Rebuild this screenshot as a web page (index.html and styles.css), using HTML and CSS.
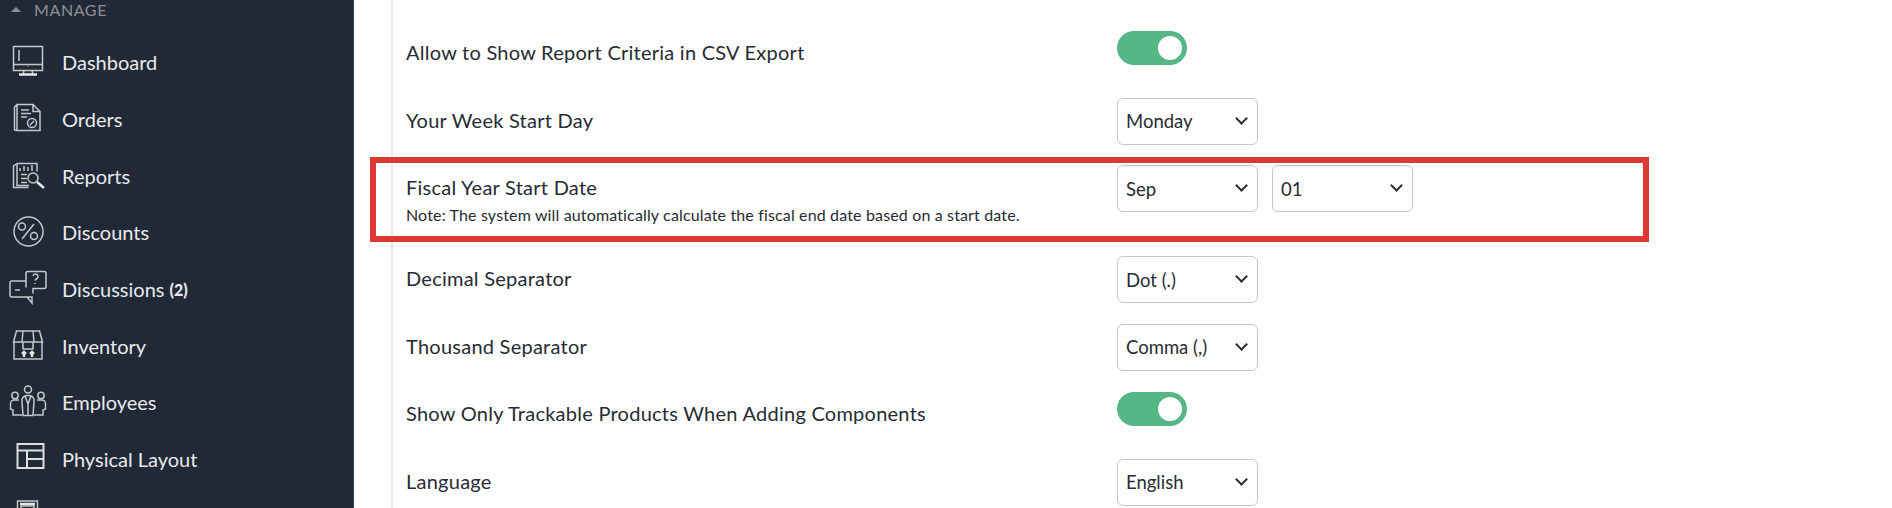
FILE: index.html
```html
<!DOCTYPE html>
<html lang="en">
<head>
  <meta charset="UTF-8" />
  <title>Settings</title>
  <link rel="stylesheet" href="styles.css">
</head>
<body>
  <div class="layout">
    <aside class="sidebar">
      <div class="menu-head"><span class="caret"></span>MANAGE</div>
      <a class="menu-item"><span class="menu-icon">
        <svg viewBox="0 0 38 32"><path d="M4.500.5h29v24h-29zM4.500 18.500h29M10 4v11M19 20.500v.5M15 25l-1 3M23 25l1 3"/><path class="thick" d="M10 28.500h18"/></svg>
      </span>Dashboard</a>
      <a class="menu-item"><span class="menu-icon">
        <svg viewBox="0 0 38 32"><path d="M8 1.500h16l7 7v19H8zM8 1.500L5.500 4v23L8 27.500M24 1.500v7h7M12 7h8M12 10.500h10M12 14h6"/><circle cx="23" cy="20" r="4.500"/><path d="M21 22l4-4"/></svg>
      </span>Orders</a>
      <a class="menu-item"><span class="menu-icon">
        <svg viewBox="0 0 38 32"><path d="M8 3.500h20v8M8 3.500v22h12M8 3.500L4.500 6v21.500h15M11 11V8M15 11V6M19 11V7M23 11V5M12 14.500h6M12 18.500h6M12 22.500h6"/><circle cx="24" cy="18" r="5"/><path class="thick" d="M28 22l7 6"/></svg>
      </span>Reports</a>
      <a class="menu-item"><span class="menu-icon">
        <svg viewBox="0 0 38 32"><circle cx="19.500" cy="15.500" r="14.500"/><circle cx="13" cy="10.500" r="3.500"/><circle cx="25" cy="20" r="3.500"/><path d="M25 8L13 23"/></svg>
      </span>Discounts</a>
      <a class="menu-item"><span class="menu-icon">
        <svg viewBox="0 0 38 32"><path d="M19-1.500h16a2 2 0 0 1 2 2v13a2 2 0 0 1-2 2H24v5M17 14.500v-14a2 2 0 0 1 2-2M17 8H3a2 2 0 0 0-2 2v12a2 2 0 0 0 2 2h20v6l-5-6M6 17h5"/><path d="M24 3a2.500 2.500 0 1 1 3 3l-1 1.500M26 10v1"/></svg>
      </span>Discussions <b class="count">(2)</b></a>
      <a class="menu-item"><span class="menu-icon">
        <svg viewBox="0 0 38 32"><path d="M4.500 12L7.500 1h23l3 11zM14 1l-1 11M24 1l1 11M5 12v17h28V12M14 12v7h10v-7"/><path class="thick" d="M15 27v-4M23 27v-4M13 24l2-2 2 2M21 24l2-2 2 2"/></svg>
      </span>Inventory</a>
      <a class="menu-item"><span class="menu-icon">
        <svg viewBox="0 0 38 32"><circle cx="19" cy="3.500" r="3.500"/><circle cx="6" cy="9.500" r="3.200"/><circle cx="32" cy="9.500" r="3.200"/><path d="M14 29.500l-1-14a5 5 0 0 1 5-6h2a5 5 0 0 1 5 6l-1 14zM16 10l3 8 3-8M19 18v11M10 14H5a3.500 3.500 0 0 0-3.500 3.500V23L4 24v5h9M28 14h5a3.500 3.500 0 0 1 3.500 3.500V23L34 24v5h-9"/></svg>
      </span>Employees</a>
      <a class="menu-item"><span class="menu-icon">
        <svg class="stroke-bright" viewBox="0 0 38 32"><path d="M8.500 1h26v24h-26zM8.500 7.500h26M18 7.500V25M18 16h16.500"/></svg>
      </span>Physical Layout</a>
      <a class="menu-item"><span class="menu-icon">
        <svg viewBox="0 0 38 32"><path d="M8.500 1h20v26h-20z"/><path class="thick" d="M11 4h15"/><path d="M12 6h13v6H12z"/></svg>
      </span></a>
    </aside>

    <main class="content">
      <div class="panel">
        <div class="row">
          <div class="row-label">Allow to Show Report Criteria in CSV Export</div>
          <div class="row-field"><span class="switch"></span></div>
        </div>
        <div class="row">
          <div class="row-label">Your Week Start Day</div>
          <div class="row-field"><span class="dropdown">Monday</span></div>
        </div>
        <div class="row row-marked">
          <div class="row-label">
            Fiscal Year Start Date
            <div class="note">Note: The system will automatically calculate the fiscal end date based on a start date.</div>
          </div>
          <div class="row-field"><span class="dropdown">Sep</span><span class="dropdown">01</span></div>
        </div>
        <div class="row">
          <div class="row-label">Decimal Separator</div>
          <div class="row-field"><span class="dropdown">Dot (.)</span></div>
        </div>
        <div class="row">
          <div class="row-label">Thousand Separator</div>
          <div class="row-field"><span class="dropdown">Comma (,)</span></div>
        </div>
        <div class="row">
          <div class="row-label">Show Only Trackable Products When Adding Components</div>
          <div class="row-field"><span class="switch"></span></div>
        </div>
        <div class="row">
          <div class="row-label">Language</div>
          <div class="row-field"><span class="dropdown">English</span></div>
        </div>
      </div>
      <div class="mark-box"></div>
    </main>
  </div>
</body>
</html>
```

FILE: styles.css
```css
html, body {
  margin: 0;
  height: 508px;
  overflow: hidden;
}

body {
  font-family: Lato, "Liberation Sans", sans-serif;
  color: #272b33;
  background: #fff;
}

.layout {
  display: flex;
  height: 508px;
  overflow: hidden;
}

.sidebar {
  width: 353px;
  flex: none;
  background: #212936;
  color: #e8eaed;
  border-right: 1px solid #3a414d;
}

.menu-head {
  display: flex;
  align-items: center;
  height: 19px;
  padding-left: 11px;
  font-size: 16px;
  letter-spacing: 0.600px;
  color: #8d9097;
}

.caret {
  width: 0;
  height: 0;
  border-left: 5px solid transparent;
  border-right: 5px solid transparent;
  border-bottom: 5px solid #8d9097;
  margin-right: 13px;
}

.menu-item {
  display: flex;
  align-items: center;
  height: 56.700px;
  font-size: 20px;
  color: #e8eaed;
}

.menu-head + .menu-item {
  margin-top: 15px;
}

.menu-icon {
  display: flex;
  width: 38px;
  margin-left: 9px;
  margin-right: 15px;
}

.menu-icon svg {
  height: 32px;
  width: 38px;
  overflow: visible;
  fill: none;
  stroke: #c4c7cb;
  stroke-width: 1.500;
}

.menu-icon .stroke-bright {
  stroke: #dcdee0;
  stroke-width: 2;
}

.menu-icon .thick {
  stroke-width: 2.500;
  stroke: #e4e6e8;
}

.count {
  font-size: 16px;
  font-weight: 900;
  margin-left: 5px;
}

.content {
  flex: 1;
  position: relative;
}

.panel {
  margin-left: 37px;
  border-left: 2px solid #e9e9ec;
  padding: 20px 0 0 13px;
  height: 508px;
  box-sizing: border-box;
}

.row {
  display: flex;
  align-items: center;
  height: 67.500px;
}

.row-marked {
  align-items: flex-start;
  height: 91px;
  padding-top: 10px;
  box-sizing: border-box;
}

.row-label {
  width: 711px;
  flex: none;
  padding-bottom: 3px;
  font-size: 20px;
  letter-spacing: 0.250px;
  line-height: 24px;
}

.row-marked .row-label {
  padding: 10px 0 0;
}

.note {
  font-size: 16px;
  letter-spacing: 0.150px;
  line-height: 20px;
  margin-top: 6px;
}

.row-field {
  display: flex;
  gap: 14px;
}

.dropdown {
  display: flex;
  align-items: center;
  width: 141px;
  height: 47px;
  box-sizing: border-box;
  padding-left: 8px;
  border: 1px solid #c6c7cc;
  border-radius: 6px;
  font-size: 18.500px;
  position: relative;
}

.dropdown::after {
  content: "";
  position: absolute;
  right: 11px;
  top: 15px;
  width: 7px;
  height: 7px;
  border-right: 2px solid #272b33;
  border-bottom: 2px solid #272b33;
  transform: rotate(45deg);
}

.switch {
  display: block;
  width: 70px;
  height: 34px;
  margin-bottom: 11px;
  border-radius: 17px;
  background: #55b686;
  position: relative;
}

.switch::after {
  content: "";
  position: absolute;
  right: 5px;
  top: 5px;
  width: 24px;
  height: 24px;
  border-radius: 50%;
  background: #fff;
}

/* red annotation drawn over the screenshot */
.mark-box {
  position: absolute;
  left: 16px;
  top: 157px;
  width: 1279px;
  height: 85px;
  box-sizing: border-box;
  border: 6px solid #dc3933;
}
```
